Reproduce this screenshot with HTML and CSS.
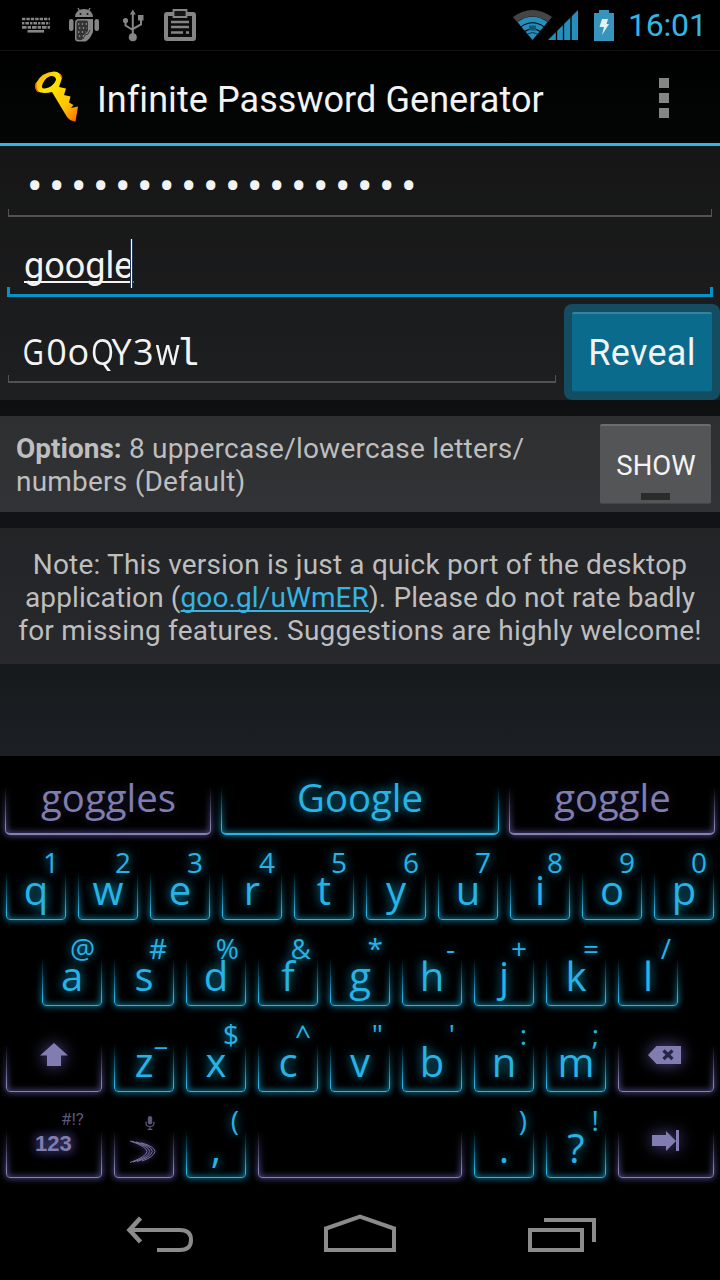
FILE: index.html
```html
<!DOCTYPE html>
<html lang="en">
<head>
<meta charset="utf-8">
<title>Infinite Password Generator</title>
<link rel="stylesheet" href="styles.css">
</head>
<body>
<div class="screen">
  <header class="status">
    <div class="status-left">
      <svg width="30" height="18" viewBox="21 16 30 18" fill="none" stroke="#858585"><path d="M22 19h28" stroke-width="2.6" stroke-dasharray="3.4 1"/><path d="M22 23.3h28" stroke-width="2.6" stroke-dasharray="2.4 1 3.6 1"/><path d="M22 27.4h28" stroke-width="2.6" stroke-dasharray="4.6 1 3.4 1"/><path d="M27.5 31.3h16.5" stroke-width="2.6"/></svg>
      <svg width="32" height="36" viewBox="68 7 32 36"><path d="M75 17a9 8 0 0 1 18 0z" fill="#858585"/><path d="M78 8l2 4M90 8l-2 4" stroke="#858585" stroke-width="1.4"/><circle cx="80.5" cy="14" r="1" fill="#111"/><circle cx="87.5" cy="14" r="1" fill="#111"/><rect x="69" y="19" width="4.5" height="12" rx="2.2" fill="#858585"/><rect x="94.500" y="19" width="4.500" height="12" rx="2.200" fill="#858585"/><path d="M79 19h14v13c-2 5-5 9-8 9.500h-7a3 3 0 0 1-3-3V23c0-3 1.500-4 4-4z" fill="#858585"/><path d="M79 20.500h7c2 0 2 1 2 3v7c-1 3-5 4-5 7l-1 2.500h-3c-2 0-2.500-1-2.500-2V24c0-2 .5-3.500 2.500-3.500z" fill="#333"/><path d="M78 24h9M79 28h8M78 32h8M79 36h5" stroke="#999" stroke-width="1.300" stroke-dasharray="1.300 2.500"/><path d="M83 39l2-4 3-1 2-4" stroke="#333" fill="none"/></svg>
      <svg width="24" height="34" viewBox="121 8 24 34" fill="none" stroke="#858585" stroke-width="2"><path d="M132.800 13v24M125.500 21v4.500l7.300 4.500M141 18v6.500l-8.200 4.500"/><path d="M129.800 14.500l3-5 3 5z" fill="#858585" stroke="none"/><circle cx="125.500" cy="20.500" r="2.600" fill="#858585" stroke="none"/><path d="M138 15h5.500v5.500H138z" fill="#858585" stroke="none"/><circle cx="132.800" cy="37.300" r="4" fill="#858585" stroke="none"/></svg>
      <svg width="32" height="33" viewBox="164 9 32 33"><path d="M167 12h26q3 0 3 3v23q0 3-3 3h-26q-3 0-3-3V15q0-3 3-3z" fill="#858585"/><path d="M168 16h24v21h-24z" fill="#0b0b0b"/><path d="M173.500 10h13v7h-13z" fill="#151515" stroke="#858585" stroke-width="1.800"/><path d="M171 22h18M171 27h18M171 32.500h12M186 32.500h3" stroke="#858585" stroke-width="2.600"/></svg>
    </div>
    <div class="status-right">
      <svg width="66" height="32" viewBox="512 9 66 32"><path d="M513 17q19.500-14 39 0l-4 5q-15.500-11-31 0z" fill="#454545"/><path d="M517.500 22q15-10.500 30 0l-3.300 4.200q-11.700-8-23.400 0z" fill="#258ebb"/><path d="M521.500 27q11-7.500 22 0l-3 3.800q-8-5.300-16 0z" fill="#258ebb"/><path d="M525.500 31.700q7-4.300 14 0l-7 8.300z" fill="#258ebb"/><path d="M529 25.500h7v5h-7z" fill="#155673"/><path d="M527.500 34q5-3 10 0" stroke="#0a2f40" fill="none"/><path d="M548 40L578 10v30z" fill="#258ebb"/><path d="M556.500 28v13M563.500 22v19M571 14v27" stroke="#000" stroke-width="1.300"/></svg>
      <svg class="battery" width="20" height="31" viewBox="594 9 20 31"><path d="M599 9h10v3h5v28h-20V12h5z" fill="#3795bd"/><path d="M602 18h6l-1.500 5h2.500l-7 11 2-8h-4.500z" fill="#e2f2f7"/></svg>
      <span class="clock">16:01</span>
    </div>
  </header>

  <div class="titlebar">
    <svg class="logo" width="48" height="54" viewBox="33 69 48 54"><defs><linearGradient id="gold" x1="0" y1="0" x2="1" y2="1"><stop offset="0" stop-color="#ff9c00"/><stop offset=".3" stop-color="#ffe600"/><stop offset=".7" stop-color="#ffc400"/><stop offset="1" stop-color="#ff6a00"/></linearGradient></defs><path fill="url(#gold)" fill-rule="evenodd" d="M36 82Q42 71 54 70.500Q61 71 62 77L59 86L66 87.500L64 94L70.500 95.500L69 101.500L73.500 104L71 107L78 105.500L75.500 120.500Q70 120 67 116L52 91Q43 93 37.500 90.500Q34 88 36 82ZM43 82Q40 88 45 87.500Q53 86 56 79Q56 75 51 75Q46 76 43 82Z"/><path d="M36 82Q35 89 39 91M60 73l2 4M72 119l3 1" stroke="#f06000" stroke-width="1.300" fill="none"/></svg>
    <h1>Infinite Password Generator</h1>
    <div class="menu"><i></i><i></i><i></i></div>
  </div>

  <main class="app">
    <section class="form">
      <div class="field field-master"><span class="value dots">••••••••••••••••••</span><span class="bracket"></span></div>
      <div class="field field-site"><span class="value"><span class="typed">google</span><span class="caret"></span></span><span class="bracket focus"></span></div>
      <div class="result">
        <div class="field field-password"><span class="value mono"><i class="tight first">G</i><i>0</i><i>o</i><i class="tight">Q</i><i>Y</i><i>3</i><i class="tight w">w</i><i class="slab">l</i></span><span class="bracket"></span></div>
        <div class="reveal"><div class="reveal-face">Reveal</div></div>
      </div>
    </section>
    <section class="options">
      <p><b>Options:</b> 8 uppercase/lowercase letters/<br>numbers (Default)</p>
      <div class="show"><span>SHOW</span><i></i></div>
    </section>
    <section class="note">
      <p class="n1">Note: This version is just a quick port of the desktop</p>
      <p class="n2">application (<a>goo.gl/uWmER</a>). Please do not rate badly</p>
      <p class="n3">for missing features. Suggestions are highly welcome!</p>
    </section>
  </main>

  <div class="keyboard">
    <div class="row suggestions">
      <div class="key side dim"><span class="frame"></span><span class="word">goggles</span></div>
      <div class="key mid"><span class="frame"></span><span class="word">Google</span></div>
      <div class="key side dim"><span class="frame"></span><span class="word">goggle</span></div>
    </div>
    <div class="row">
      <div class="key"><span class="frame"></span><span class="hint">1</span><span class="letter">q</span></div>
      <div class="key"><span class="frame"></span><span class="hint">2</span><span class="letter">w</span></div>
      <div class="key"><span class="frame"></span><span class="hint">3</span><span class="letter">e</span></div>
      <div class="key"><span class="frame"></span><span class="hint">4</span><span class="letter">r</span></div>
      <div class="key"><span class="frame"></span><span class="hint">5</span><span class="letter">t</span></div>
      <div class="key"><span class="frame"></span><span class="hint">6</span><span class="letter">y</span></div>
      <div class="key"><span class="frame"></span><span class="hint">7</span><span class="letter">u</span></div>
      <div class="key"><span class="frame"></span><span class="hint">8</span><span class="letter">i</span></div>
      <div class="key"><span class="frame"></span><span class="hint">9</span><span class="letter">o</span></div>
      <div class="key"><span class="frame"></span><span class="hint">0</span><span class="letter">p</span></div>
    </div>
    <div class="row indent">
      <div class="key"><span class="frame"></span><span class="hint">@</span><span class="letter">a</span></div>
      <div class="key"><span class="frame"></span><span class="hint">#</span><span class="letter">s</span></div>
      <div class="key"><span class="frame"></span><span class="hint">%</span><span class="letter">d</span></div>
      <div class="key"><span class="frame"></span><span class="hint">&amp;</span><span class="letter">f</span></div>
      <div class="key"><span class="frame"></span><span class="hint">*</span><span class="letter">g</span></div>
      <div class="key"><span class="frame"></span><span class="hint">-</span><span class="letter">h</span></div>
      <div class="key"><span class="frame"></span><span class="hint">+</span><span class="letter">j</span></div>
      <div class="key"><span class="frame"></span><span class="hint">=</span><span class="letter">k</span></div>
      <div class="key"><span class="frame"></span><span class="hint">/</span><span class="letter">l</span></div>
    </div>
    <div class="row">
      <div class="key wide dim"><span class="frame"></span><svg class="shift" width="28" height="24" viewBox="40 1043 28 24"><path d="M54 1043l14 12.500h-7V1066H47v-10.500h-7z" fill="#827db0"/></svg></div>
      <div class="key"><span class="frame"></span><span class="hint">_</span><span class="letter">z</span></div>
      <div class="key"><span class="frame"></span><span class="hint">$</span><span class="letter">x</span></div>
      <div class="key"><span class="frame"></span><span class="hint">^</span><span class="letter">c</span></div>
      <div class="key"><span class="frame"></span><span class="hint">"</span><span class="letter">v</span></div>
      <div class="key"><span class="frame"></span><span class="hint">'</span><span class="letter">b</span></div>
      <div class="key"><span class="frame"></span><span class="hint">:</span><span class="letter">n</span></div>
      <div class="key"><span class="frame"></span><span class="hint">;</span><span class="letter">m</span></div>
      <div class="key wide dim"><span class="frame"></span><svg class="erase" width="33" height="18" viewBox="648 1046 33 18"><path d="M648 1055l8.500-9H681v18h-24.500z" fill="#827db0"/><path d="M663.500 1050.500l9 8.500M672.500 1050.500l-9 8.500" stroke="#262447" stroke-width="3.200"/></svg></div>
    </div>
    <div class="row last">
      <div class="key wide dim"><span class="frame"></span><span class="symbols">#!?</span><span class="numbers">123</span></div>
      <div class="key dim"><span class="frame"></span><svg class="mic" width="10" height="14" viewBox="0 0 10 14"><rect x="2.800" y="0" width="4.400" height="8.500" rx="2.200" fill="#5a5779"/><path d="M1 5.500v1.500q0 3.500 4 3.500t4-3.500V5.500M5 10.500v3M2.500 13.300h5" fill="none" stroke="#5a5779" stroke-width="1.200"/></svg><svg class="swype" width="28" height="24" viewBox="129 1140 28 24" fill="none" stroke="#827db0" stroke-width=".9"><path d="M130 1141Q146 1146 147 1151.500Q146 1157 130 1162.500"/><path d="M132 1141.300Q149 1146 149.700 1151.500Q149 1157 133 1162"/><path d="M136 1142Q152 1146 152.300 1151.500Q151 1157 137 1161.500"/><path d="M141 1142.700Q154.500 1146.500 155 1151.500Q153.500 1157 142 1161"/></svg></div>
      <div class="key"><span class="frame"></span><span class="hint">(</span><span class="letter">,</span></div>
      <div class="key space dim"><span class="frame"></span></div>
      <div class="key"><span class="frame"></span><span class="hint">)</span><span class="letter">.</span></div>
      <div class="key"><span class="frame"></span><span class="hint">!</span><span class="letter">?</span></div>
      <div class="key wide dim"><span class="frame"></span><svg class="tab" width="28" height="22" viewBox="652 1130 28 22"><path d="M652 1135h14v-4l10 10-10 10v-5h-14zM676 1130h3v21h-3z" fill="#827db0"/></svg></div>
    </div>
  </div>

  <nav class="navbar">
    <svg width="68" height="40" viewBox="126 1213 68 40" fill="none" stroke="#8b8b8b" stroke-width="4"><path d="M130 1230h50q11 0 11 10t-11 10h-23"/><path d="M140.500 1218l-11 12 11 12" stroke-width="4.500"/></svg>
    <svg class="home" width="72" height="40" viewBox="324 1213 72 40" fill="none" stroke="#8b8b8b" stroke-width="4"><path d="M326 1250v-21.500l34-12 34 12V1250z"/></svg>
    <svg width="68" height="40" viewBox="528 1213 68 40" fill="none" stroke="#8b8b8b" stroke-width="4"><path d="M530 1230h52v20h-52zM544 1220h50v22"/></svg>
  </nav>
</div>
</body>
</html>
```
FILE: styles.css
```css
*, *::before { box-sizing: border-box; }
body { margin: 0; background: #000; font-family: Roboto, sans-serif; }
h1, p { margin: 0; font-weight: 400; }
i { font-style: normal; }
svg { display: block; flex: none; }
.screen { width: 720px; height: 1280px; overflow: hidden; display: flex; flex-direction: column; color: #f3f3f3; }

.status { height: 50px; display: flex; justify-content: space-between; background: #000; }
.status-left { display: flex; align-items: center; padding-left: 21px; }
.status-left svg:nth-child(2) { margin-left: 17px; }
.status-left svg:nth-child(3) { margin-left: 21px; }
.status-left svg:nth-child(4) { margin-left: 19px; }
.status-right { display: flex; align-items: center; padding-right: 14px; }
.battery { margin-left: 16px; }
.clock { width: 78px; margin-left: 14px; color: #33b5e5; font-size: 32px; letter-spacing: -.2px; line-height: 51px; white-space: nowrap; padding-top: 1px; }

.titlebar { height: 96px; display: flex; align-items: center; padding: 0 51px 0 33px; border-top: 1px solid #121212; border-bottom: 3px solid #33b5e5; background: linear-gradient(#000, #040606); }
.titlebar h1 { flex: 1; margin-left: 16px; padding-top: 5px; font-size: 36px; letter-spacing: .06px; white-space: nowrap; }
.logo { margin-top: -1px; }
.menu { display: grid; gap: 5px; padding-top: 2px; }
.menu i { width: 10px; height: 10px; background: #858585; }

.app { height: 610px; display: flex; flex-direction: column; background: linear-gradient(#0c0c0c 0, #0e0f11 260px, #111316 375px, #16191c 518px, #1c2025 610px); }
.form { height: 254px; background: linear-gradient(#161616, #1e1f21); }
.field { display: flex; flex-direction: column; justify-content: space-between; }
.value { padding-left: 24px; font-size: 36px; line-height: 48px; white-space: nowrap; }
.bracket { flex: none; height: 8px; margin: 0 8px; border: 1px solid #515253; border-top: 0; border-bottom-width: 2px; }
.bracket.focus { height: 10px; margin: 0 7px; border: 3px solid #0692c4; border-top: 0; }
.field-master { height: 71px; padding-top: 18px; }
.dots { padding-left: 27px; font-size: 46px; line-height: 44px; letter-spacing: 6.480px; }
.field-site { height: 80px; padding-top: 22px; }
.field-site .value { display: flex; align-items: flex-start; height: 48px; }
.typed { line-height: 54px; text-decoration: underline; text-decoration-thickness: 2px; text-underline-offset: 3px; text-decoration-skip-ink: none; }
.caret { width: 3px; height: 49px; margin-left: -3px; border: solid #263650; border-width: 0 1px; background: #fff; }
.result { display: flex; height: 103px; padding-top: 7px; }
.field-password { width: 564px; height: 79px; padding-top: 24px; }
.mono { display: flex; align-items: baseline; height: 46px; font-family: "Open Sans", sans-serif; }
.mono i { width: 21.700px; text-align: center; }
.mono .tight { transform: scaleX(.82); }
.mono .first { transform-origin: 0 50%; transform: translateX(-1.500px) scaleX(.82); }
.mono .w { transform: scaleX(.87); }
.mono .slab { font-family: "Liberation Mono", monospace; font-size: 39px; }
.reveal { width: 156px; height: 96px; padding: 8px; border-radius: 8px; background: #144c61; }
.reveal-face { height: 80px; border-top: 2px solid #39829b; border-bottom: 1px solid #095974; border-radius: 2px; background: #0a6b8c; text-align: center; font-size: 36px; letter-spacing: .3px; line-height: 78px; }

.options { height: 96px; margin-top: 16px; padding: 8px 9px 8px 16px; display: flex; justify-content: space-between; background: linear-gradient(#2e2f30, #323336); color: #bebebe; font-size: 28px; line-height: 33px; }
.options p { padding-top: 8px; letter-spacing: .22px; white-space: nowrap; }
.options b { letter-spacing: 0; }
.show { width: 111px; height: 80px; display: flex; flex-direction: column; align-items: center; border-top: 2px solid #6c6d6d; border-bottom: 1px solid #444; border-radius: 2px; background: #545556; color: #f3f3f3; }
.show span { padding: 23px 0 0 1px; font-size: 27.500px; line-height: 33px; }
.show i { width: 29px; height: 7px; margin-top: 11px; background: #2b2b2b; }
.note { height: 136px; margin-top: 16px; padding-top: 20px; background: linear-gradient(#222426, #28292c); color: #bebebe; font-size: 28px; line-height: 33px; text-align: center; white-space: nowrap; }
.note a { color: #33b5e5; text-decoration: underline; text-decoration-thickness: 2px; text-underline-offset: 3px; text-decoration-skip-ink: none; }
.n1 { letter-spacing: .18px; }
.n2 { letter-spacing: .11px; }
.n3 { letter-spacing: .21px; }

.keyboard { height: 428px; background: #000; font-family: "Open Sans", sans-serif; color: #27b3e6; }
.row { height: 86px; display: flex; gap: 12px; padding-left: 6px; }
.row.indent { padding-left: 42px; }
.row.last { height: 84px; }
.suggestions { gap: 10px; padding-left: 5px; }
.key { --line: #2bb2e4; --glow: rgba(18, 126, 160, .85); position: relative; width: 60px; height: 78px; flex: none; display: flex; flex-direction: column; text-shadow: 0 0 10px rgba(18, 126, 160, .85), 0 0 14px rgba(18, 126, 160, .6); }
.key.dim { --line: #8480b2; --glow: rgba(80, 76, 140, .85); color: #807db0; text-shadow: 0 0 12px rgba(80, 76, 140, .4); }
.key.wide { width: 96px; }
.key.space { width: 204px; }
.key.side { width: 206px; }
.key.mid { width: 278px; }
.frame { position: absolute; inset: 22px -8px -8px; -webkit-mask-image: linear-gradient(transparent 8px, #000 48px); mask-image: linear-gradient(transparent 8px, #000 48px); }
.frame::before { content: ""; display: block; height: 56px; margin: 0 8px; border: 1px solid var(--line); border-radius: 4px; box-shadow: 0 0 6px 1px var(--glow), inset 0 0 6px 1px var(--glow); }
.suggestions .frame::before { height: 57px; border-bottom-width: 2px; border-radius: 5px; }
.word { position: relative; text-align: center; font-size: 38.300px; line-height: 40px; padding-top: 21px; }
.side .word { padding-left: 1px; }
.hint { position: relative; height: 34px; padding: 6px 7px 0 0; font-size: 28px; line-height: 28px; text-align: right; }
.letter { position: relative; margin-top: -6px; font-size: 40px; line-height: 40px; text-align: center; }
.key > svg { position: relative; filter: drop-shadow(0 0 8px #554e96); }
.shift { margin: 29px 0 0 34px; }
.erase { margin: 32px 0 0 30px; }
.tab { margin: 30px 0 0 34px; }
.symbols { position: relative; padding-left: 55px; padding-top: 11px; font: 17px/16px Roboto, sans-serif; color: #5a5779; text-shadow: none; }
.numbers { position: relative; margin-top: 6px; padding-left: 29px; font: bold 22px/22px "Liberation Sans", sans-serif; text-shadow: 0 0 10px #554e96, 0 0 14px #554e96; }
.key > .mic { margin: 16px 0 0 31px; filter: none; }
.key > .swype { margin: 10px 0 0 15px; filter: drop-shadow(0 0 3px #554e96); }

.navbar { height: 96px; display: flex; padding: 29px 124px 0 126px; justify-content: space-between; background: #000; }
.home { margin: 0 1px 0 -1px; }
```
